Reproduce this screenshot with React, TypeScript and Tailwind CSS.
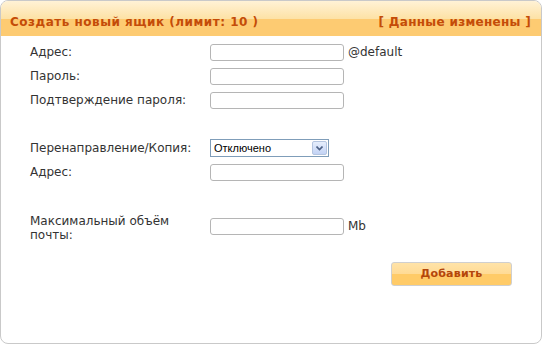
import React from 'react';

const font = { fontFamily: '"DejaVu Sans", Verdana, sans-serif' };

const TextInput = () => (
  <div className="w-[134px] h-[17px] border border-[#b5b5b5] rounded-[3px] bg-white" />
);

const Row = ({ label, children, h = 'h-[24px]', lc = '' }: { label: string; children: React.ReactNode; h?: string; lc?: string }) => (
  <div className={`flex items-center ${h}`}>
    <div className={`w-[180px] pr-[10px] text-[12px] leading-[14px] text-[#333] ${lc}`}>{label}</div>
    <div className="flex items-center gap-[4px] text-[12px] text-[#333]">{children}</div>
  </div>
);

export default function App() {
  return (
    <div className="w-[542px] h-[344px] bg-white" style={font}>
      <div className="w-full h-full border border-[#c9c9c9] rounded-[8px] overflow-hidden flex flex-col">
        <div className="h-[35px] flex items-center justify-between pl-[9px] pr-[10px] pt-[7px] bg-[linear-gradient(to_bottom,#fff2d6_0%,#fde2a6_50%,#fdcb72_52%,#fdcb72_100%)]">
          <span className="text-[12px] font-bold tracking-[0.5px] text-[#c44c08]">Создать новый ящик (лимит: 10 )</span>
          <span className="text-[12px] font-bold tracking-[0.3px] text-[#c44c08]">[ Данные изменены ]</span>
        </div>
        <div className="pl-[29px] pt-[4px]">
          <Row label="Адрес:">
            <TextInput />
            <span>@default</span>
          </Row>
          <Row label="Пароль:">
            <TextInput />
          </Row>
          <Row label="Подтверждение пароля:">
            <TextInput />
          </Row>
          <div className="h-[24px]" />
          <Row label="Перенаправление/Копия:">
            <div className="w-[119px] h-[18px] border border-[#7f9db9] bg-white flex items-center justify-between pl-[3px] pr-[1px]">
              <span className="text-[11px] text-black" style={{ fontFamily: '"Liberation Sans", Arial, sans-serif' }}>Отключено</span>
              <div className="w-[15px] h-[14px] rounded-[2px] border border-[#b4c5e0] bg-[linear-gradient(to_bottom,#e6eefc,#c3d3f5)] flex items-center justify-center">
                <svg width="7" height="5" viewBox="0 0 7 5">
                  <path d="M0.5 0.5 L3.5 3.5 L6.5 0.5" stroke="#4d6185" strokeWidth="1.6" fill="none" />
                </svg>
              </div>
            </div>
          </Row>
          <Row label="Адрес:">
            <TextInput />
          </Row>
          <div className="h-[28px]" />
          <Row label="Максимальный объём почты:" h="h-[28px]" lc="pt-[4px]">
            <TextInput />
            <span>Mb</span>
          </Row>
          <div className="flex justify-end pr-[29px] mt-[22px]">
            <button className="w-[121px] h-[24px] border border-[#cfcfcf] rounded-[3px] bg-[linear-gradient(to_bottom,#ffe3a8_0%,#ffdb96_48%,#ffcb68_52%,#ffcb68_100%)] text-[11px] font-bold tracking-[0.2px] text-[#b4460a]">
              Добавить
            </button>
          </div>
        </div>
      </div>
    </div>
  );
}
